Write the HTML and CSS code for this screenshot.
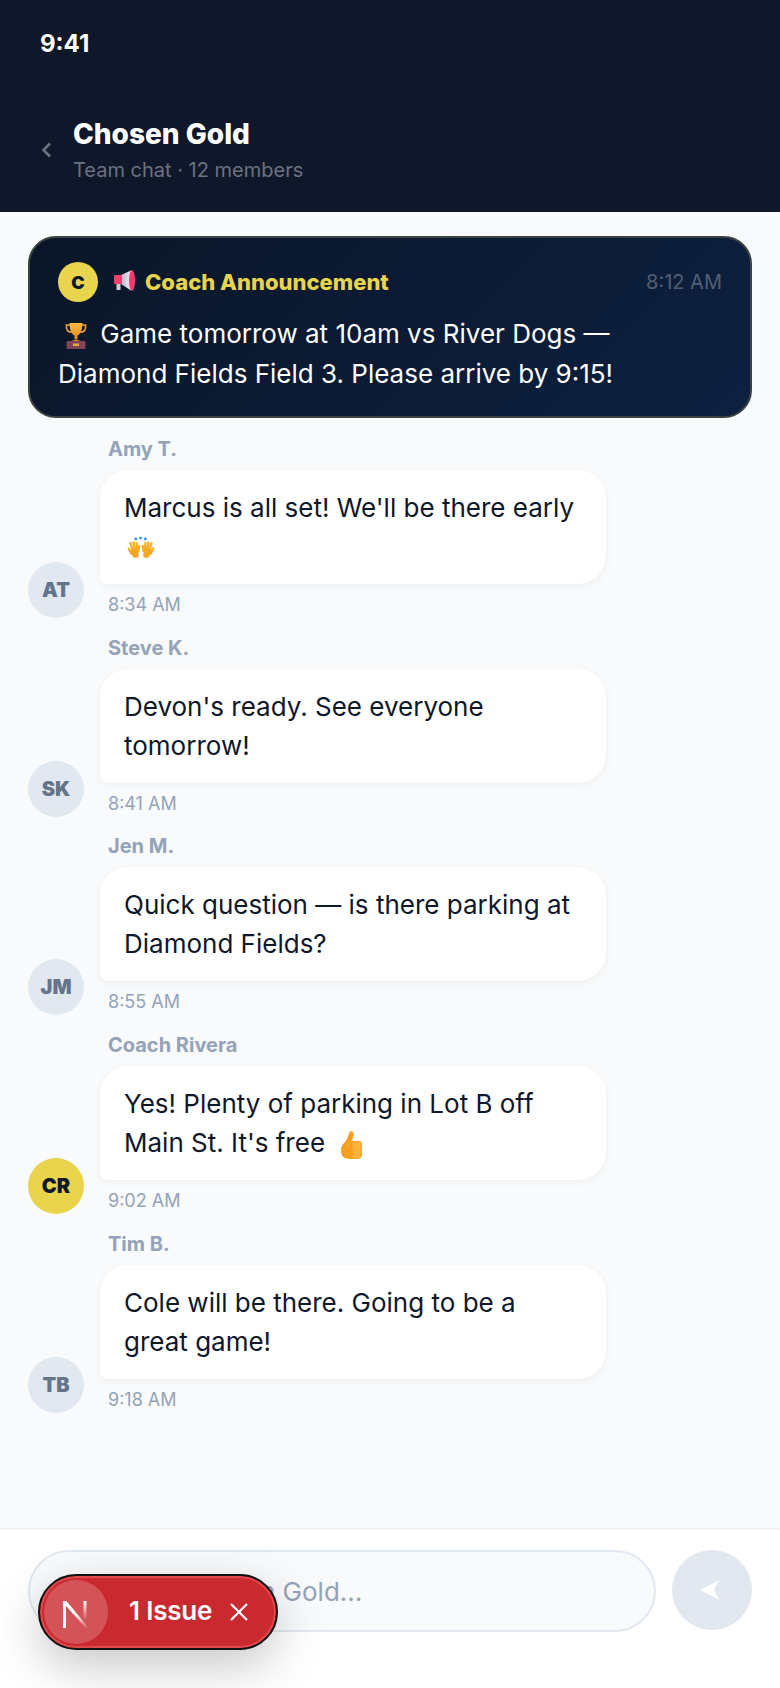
FILE: index.html
```html
<!DOCTYPE html>
<html lang="en">
<head>
<meta charset="utf-8">
<title>Chosen Gold</title>
<link rel="stylesheet" href="styles.css">
</head>
<body>
<div class="app">
  <header class="header">
    <div class="status-time">9:41</div>
    <div class="title-row">
      <svg class="back" viewBox="0 0 12 18" width="12" height="18"><path d="M10 2.500 3.500 9l6.500 6.500" fill="none" stroke="currentColor" stroke-width="2.600"/></svg>
      <div>
        <h1 class="title">Chosen Gold</h1>
        <p class="subtitle">Team chat · 12 members</p>
      </div>
    </div>
  </header>
  <main class="messages">
    <section class="announce">
      <div class="announce-head">
        <span class="announce-avatar">C</span>
        <span class="announce-label">
          <svg class="emoji-megaphone" role="img" aria-label="📢" viewBox="0 0 24 24" width="24" height="24">
            <defs><linearGradient id="cone" x1="0" y1="0" x2="1" y2="0"><stop offset="0" stop-color="#b9b5cc"/><stop offset="1" stop-color="#f1eef8"/></linearGradient></defs>
            <rect x="3.500" y="13" width="4" height="7" fill="#cfcbdc"/>
            <path d="M8 5 18 .5v20L8 14z" fill="url(#cone)"/>
            <rect x="1" y="5" width="8" height="9" rx="1" fill="#f43f73"/>
            <ellipse cx="19" cy="10.500" rx="3" ry="10.500" fill="#f2386c"/>
          </svg>
          Coach Announcement
        </span>
        <span class="announce-time">8:12 AM</span>
      </div>
      <p class="announce-text"><svg class="emoji-trophy" role="img" aria-label="🏆" viewBox="0 0 24 28" width="24" height="28">
          <defs><linearGradient id="cup" x1="0" y1="0" x2="0" y2="1"><stop offset="0" stop-color="#fdb93f"/><stop offset="1" stop-color="#e3861f"/></linearGradient></defs>
          <path d="M6 3H2.500c-.5 4 1 7 5 7.500M18 3h3.500c.5 4-1 7-5 7.500" fill="none" stroke="#eea232" stroke-width="1.600"/>
          <path d="M5.500 1h13c0 6-1.500 11-5 12.500v4h-3v-4C7 12 5.500 7 5.500 1z" fill="url(#cup)"/>
          <path d="M7.500 19c1-1.500 8-1.500 9 0z" fill="#d8861f"/>
          <rect x="2.500" y="19" width="19" height="8" rx="1" fill="#7f4458"/>
          <rect x="9" y="21.500" width="6" height="2.500" fill="#e8a93a"/>
        </svg> Game tomorrow at 10am vs River Dogs — Diamond Fields Field 3. Please arrive by 9:15!</p>
    </section>
    <article class="row">
      <div class="avatar">AT</div>
      <div class="msg"><div class="name">Amy T.</div><div class="bubble">Marcus is all set! We'll be there early <svg class="emoji-hands" role="img" aria-label="🙌" viewBox="0 0 32 28" width="28" height="25">
          <g fill="#2f86e6"><circle cx="10" cy="3" r="1.500"/><circle cx="15.500" cy="2" r="1.500"/><circle cx="21" cy="3" r="1.500"/></g>
          <g fill="none" stroke="#fbb02a" stroke-width="2.700" stroke-linecap="round"><path d="M4 8l2.500 8M7.500 7l1.500 9M11 8l.5 8M14 11l-1 6M2 14l3 6"/><circle cx="9" cy="18" r="3.500" fill="#f7a822" stroke="none"/><path d="M6 17l3 5M10 16l1 6" stroke="#f7a822" stroke-width="5"/></g>
          <g fill="none" stroke="#fbb02a" stroke-width="2.700" stroke-linecap="round"><path d="M28 8l-2.500 8M24.500 7 23 16M21 8l-.500 8M18 11l1 6M30 14l-3 6"/><path d="M26 17l-3 5M22 16l-1 6" stroke="#f7a822" stroke-width="5"/></g>
        </svg></div><div class="time">8:34 AM</div></div>
    </article>
    <article class="row">
      <div class="avatar">SK</div>
      <div class="msg"><div class="name">Steve K.</div><div class="bubble">Devon's ready. See everyone tomorrow!</div><div class="time">8:41 AM</div></div>
    </article>
    <article class="row">
      <div class="avatar">JM</div>
      <div class="msg"><div class="name">Jen M.</div><div class="bubble">Quick question — is there parking at Diamond Fields?</div><div class="time">8:55 AM</div></div>
    </article>
    <article class="row">
      <div class="avatar avatar-coach">CR</div>
      <div class="msg"><div class="name">Coach Rivera</div><div class="bubble">Yes! Plenty of parking in Lot B off Main St. It's free <svg class="emoji-thumb" role="img" aria-label="👍" viewBox="0 0 24 30" width="24" height="30">
          <path d="M11 1.500c2.500-1 4 1 3.500 3.500L13 11h7c2.500 0 3 2 3 4v9c0 3-2 5-5 5h-7C5 29 2 26 2 21c0-5 2-7 4-9 2.500-2.500 3-7 5-10.500z" fill="#f7a01f"/>
          <g fill="#fdb43a"><rect x="13" y="11.500" width="10" height="4.500" rx="2.200"/><rect x="13.500" y="16" width="9.500" height="4.300" rx="2.100"/><rect x="13.500" y="20.300" width="9" height="4.200" rx="2.100"/><rect x="13.500" y="24.500" width="8" height="4" rx="2"/></g>
          <path d="M11 1.500c2.500-1 4 1 3.500 3.500L13 11c-3 1-4 4-4 7" fill="none" stroke="#ffc65a" stroke-width=".8" opacity=".6"/>
        </svg></div><div class="time">9:02 AM</div></div>
    </article>
    <article class="row">
      <div class="avatar">TB</div>
      <div class="msg"><div class="name">Tim B.</div><div class="bubble">Cole will be there. Going to be a great game!</div><div class="time">9:18 AM</div></div>
    </article>
  </main>
  <footer class="composer">
    <input class="field" type="text" placeholder="Message Chosen Gold...">
    <button class="send" type="button" aria-label="Send">
      <svg viewBox="0 0 20 20" width="20" height="20"><path d="M0 10 19.500 0 14 10l5.500 10z" fill="#fff"/></svg>
    </button>
  </footer>
  <div class="issue-pill">
    <span class="next-logo">
      <svg viewBox="0 0 32 32" width="32" height="32">
        <defs>
          <linearGradient id="stem" x1="0" y1="5" x2="0" y2="24" gradientUnits="userSpaceOnUse"><stop offset="0" stop-color="#fff"/><stop offset="1" stop-color="#fff" stop-opacity="0"/></linearGradient>
          <linearGradient id="diag" x1="17" y1="19" x2="28" y2="32" gradientUnits="userSpaceOnUse"><stop offset="0" stop-color="#fff"/><stop offset="1" stop-color="#fff" stop-opacity="0"/></linearGradient>
        </defs>
        <path d="M3 5h3.200L28.500 31.500l-2.300 1L6 9.500V32H3z" fill="url(#diag)"/>
        <path d="M3 5h3.200l9 10.800-2 2.200L6 9.500V32H3z" fill="#fff"/>
        <rect x="23.500" y="5" width="3" height="19" fill="url(#stem)"/>
      </svg>
    </span>
    <span class="issue-text">1 Issue</span>
    <svg class="issue-x" viewBox="0 0 20 20" width="20" height="20"><path d="M2 2l16 16M18 2 2 18" stroke="#fff" stroke-width="2.200" fill="none"/></svg>
  </div>
</div>
</body>
</html>
```
FILE: styles.css
```css
* { box-sizing: border-box; }
html, body { margin: 0; padding: 0; }
body { font-family: Inter, "Noto Sans", sans-serif; background: #f8fafc; color: #0f172a; }
.app { position: relative; width: 780px; height: 1688px; display: flex; flex-direction: column; overflow: hidden; }

.header { height: 212px; flex: none; background: #0f172a; padding: 29px 40px 0; color: #fff; }
.status-time { font-size: 24px; font-weight: 700; line-height: 30px; }
.title-row { display: flex; align-items: center; gap: 21px; margin-top: 56px; }
.back { color: #6b7280; margin-top: 1px; flex: none; }
.title { margin: 0; font-size: 28px; font-weight: 800; line-height: 38px; }
.subtitle { margin: 3px 0 0; font-size: 20px; line-height: 28px; color: #6b7280; }

.messages { flex: 1; min-height: 0; padding: 24px 28px 0; display: flex; flex-direction: column; gap: 18.75px; }
.announce { flex: none; height: 182px; margin-bottom: 1px; border: 2px solid #3a433f; border-radius: 28px; background: linear-gradient(135deg, #0a1628, #0d2040); padding: 24px 28px; color: #fff; }
.announce-head { display: flex; align-items: center; height: 40px; }
.announce-avatar { width: 40px; height: 40px; border-radius: 50%; background: #e8d44d; color: #0f172a; font-size: 18px; font-weight: 900; display: flex; align-items: center; justify-content: center; }
.announce-label { margin-left: 15px; font-size: 22px; font-weight: 800; color: #e8d44d; display: flex; align-items: center; gap: 8px; }
.announce-time { margin-left: auto; font-size: 20px; color: rgba(255,255,255,.3); }
.announce-text { margin: 12px 0 0; font-size: 26px; line-height: 40px; }
.emoji-megaphone { flex: none; }
.emoji-trophy { vertical-align: -7px; margin: 0 5px 0 6px; }
.emoji-hands { vertical-align: -5px; margin-left: 3px; }
.emoji-thumb { vertical-align: -8px; margin-left: 7px; }

.row { flex: none; display: flex; align-items: flex-end; gap: 16px; }
.avatar { flex: none; width: 56px; height: 56px; border-radius: 50%; background: #e2e8f0; color: #64748b; font-size: 20px; font-weight: 900; display: flex; align-items: center; justify-content: center; }
.avatar-coach { background: #e8d44d; color: #0f172a; }
.msg { width: 506px; padding-bottom: 1px; }
.name { padding-left: 8px; font-size: 20px; font-weight: 700; line-height: 22px; color: #94a3b8; margin-bottom: 10px; }
.bubble { height: 114px; background: #fff; border-radius: 28px 28px 28px 8px; padding: 18px 24px; font-size: 26px; line-height: 39px; color: #0f172a; box-shadow: 0 2px 8px rgba(0,0,0,.05); }
.time { padding-left: 8px; margin-top: 9px; font-size: 18px; line-height: 24px; color: #94a3b8; }

.composer { flex: none; height: 160px; background: #fff; border-top: 2px solid #f1f5f9; padding: 20px 28px 0; display: flex; gap: 16px; align-items: flex-start; }
.field { flex: 1; min-width: 0; height: 82px; border: 2px solid #e2e8f0; border-radius: 41px; background: #f8fafc; padding: 0 32px; font: 26px Inter, sans-serif; color: #0f172a; outline: none; }
.field::placeholder { color: #94a3b8; opacity: 1; }
.send { flex: none; width: 80px; height: 80px; border: 0; border-radius: 50%; background: #e2e8f0; display: flex; align-items: center; justify-content: center; padding: 0 4px 0 0; }

.issue-pill { position: absolute; left: 38px; top: 1574px; width: 240px; height: 76px; border-radius: 38px; background: #c9292f; border: 2px solid #111; box-shadow: inset 0 0 0 2px #e04a4f, 0 16px 48px rgba(0,0,0,.22); display: flex; align-items: center; color: #fff; }
.next-logo { position: absolute; left: 4px; top: 4px; width: 64px; height: 64px; border-radius: 50%; background: rgba(255,255,255,.2); display: flex; align-items: center; justify-content: center; }
.issue-text { margin-left: 89px; font-size: 26px; font-weight: 600; letter-spacing: -0.2px; line-height: 30px; margin-top: -2px; }
.issue-x { margin-left: 17px; }
```
